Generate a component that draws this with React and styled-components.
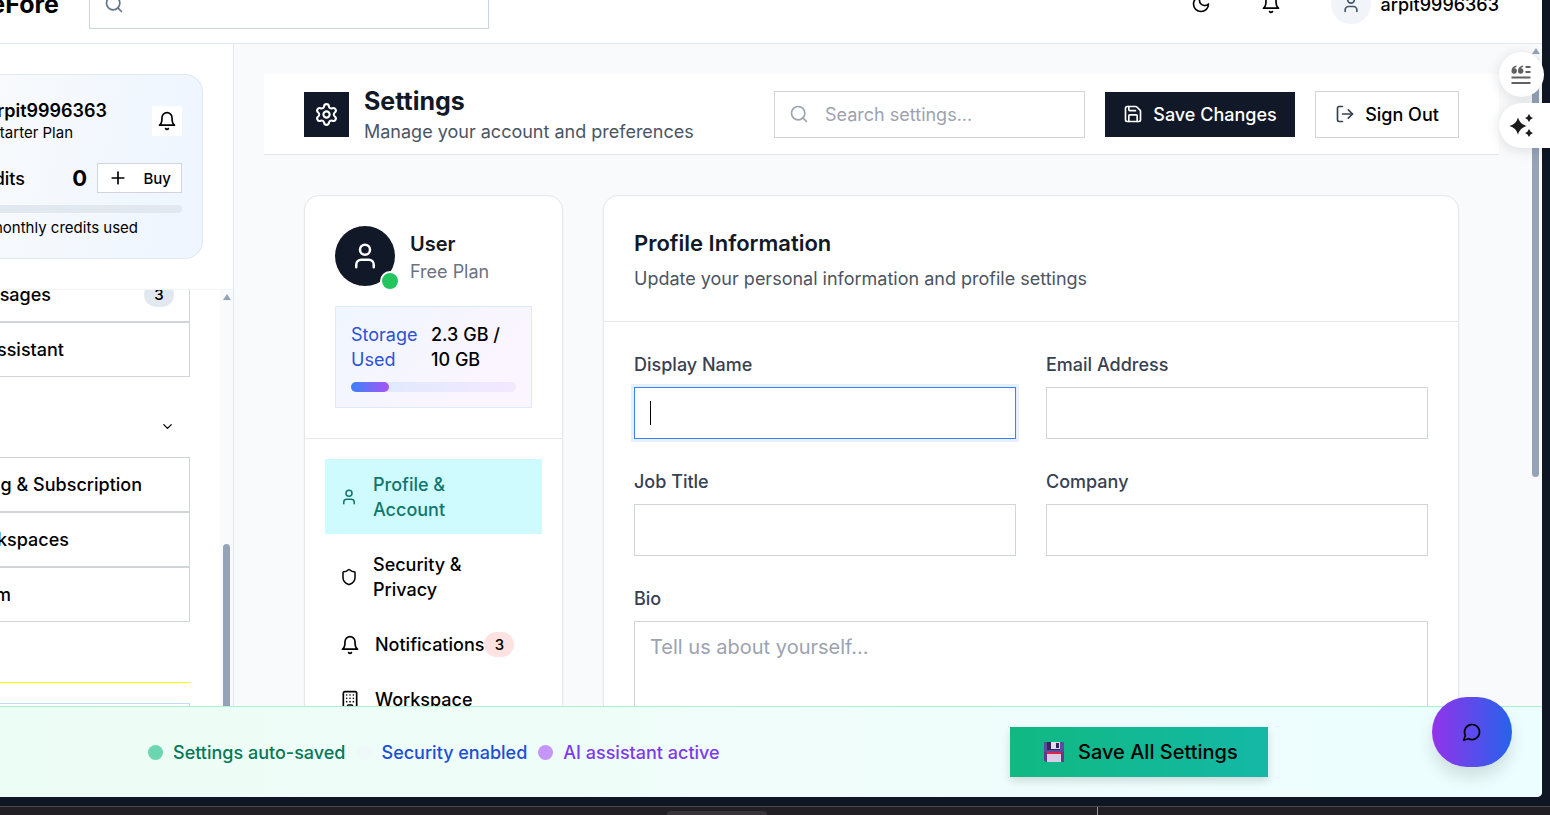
import React from "react";
import styled, { createGlobalStyle, css } from "styled-components";
import { Building, ChevronDown, LogOut, Plus, Save, Search, Settings, User } from "lucide-react";

const GlobalStyle = createGlobalStyle`
  *, *::before, *::after { box-sizing: border-box; }
  body { margin: 0; background: #0f1624; font-family: Inter, "Liberation Sans", sans-serif; font-size: 18px; line-height: 25px; color: #000; }
  button, input, textarea { font: inherit; color: inherit; }
  h1, h2, p { margin: 0; }
  svg { flex: none; display: block; }
`;

/* ---------- icons ---------- */
const Stroke = ({ size = 20, width = 2, children }) => (
  <svg width={size} height={size} viewBox="0 0 24 24" fill="none" stroke="currentColor" strokeWidth={width} strokeLinecap="round" strokeLinejoin="round" aria-hidden="true">
    {children}
  </svg>
);
const BellIcon = (props) => (
  <Stroke {...props}>
    <path d="M6 8a6 6 0 0 1 12 0c0 7 3 9 3 9H3s3-2 3-9" />
    <path d="M10.3 21a1.94 1.94 0 0 0 3.4 0" />
  </Stroke>
);
const MoonIcon = (props) => (
  <Stroke {...props}><path d="M12 3a6 6 0 0 0 9 9 9 9 0 1 1-9-9Z" /></Stroke>
);
const ShieldIcon = (props) => (
  <Stroke {...props}><path d="M20 13c0 5-3.5 7.5-7.66 8.95a1 1 0 0 1-.67-.01C7.5 20.5 4 18 4 13V6a1 1 0 0 1 1-1c2 0 4.5-1.2 6.24-2.72a1.17 1.17 0 0 1 1.52 0C14.51 3.81 17 5 19 5a1 1 0 0 1 1 1z" /></Stroke>
);
const ChatIcon = (props) => (
  <Stroke {...props}><path d="M7.9 20A9 9 0 1 0 4 16.1L2 22Z" /></Stroke>
);
const QuoteIcon = () => (
  <svg width="20" height="20" viewBox="0 0 20 20" fill="#606060" aria-hidden="true">
    <path d="M5.500 .5C2 1 .5 3.300 .5 6A2.700 2.700 0 1 0 3.400 3.300C3.700 2.700 4.500 2.300 5.500 2.100Z" />
    <path d="M12 .5C8.500 1 7 3.300 7 6A2.700 2.700 0 1 0 9.900 3.300C10.200 2.700 11 2.300 12 2.100Z" />
    <path d="M14.500 1h5v2h-5zM14.500 6h5v2h-5zM.5 11.500h19v2h-19zM.5 17h19v2h-19z" />
  </svg>
);
const SparkleIcon = () => (
  <svg width="24" height="24" viewBox="0 0 24 24" fill="#1c1c1c" aria-hidden="true">
    <path d="M9 3.500Q10.800 10.200 17.500 12Q10.800 13.800 9 20.500Q7.200 13.800 .5 12Q7.200 10.200 9 3.500Z" />
    <path d="M20 0Q21 3 24 4Q21 5 20 8Q19 5 16 4Q19 3 20 0Z" />
    <path d="M20 15Q21 18 24 19Q21 20 20 23Q19 20 16 19Q19 18 20 15Z" />
  </svg>
);
const FloppyIcon = () => (
  <svg width="20" height="20" viewBox="0 0 20 20" aria-hidden="true">
    <path d="M2 0H19a1 1 0 0 1 1 1V19a1 1 0 0 1-1 1H2L0 18V1A1 1 0 0 1 1 0Z" fill="#5c4a9c" />
    <path d="M0 10H20V19a1 1 0 0 1-1 1H2L0 18Z" fill="#64398c" />
    <path d="M3 0H16V8H3Z" fill="#33265c" />
    <path d="M7 0H16V7H7Z" fill="#e2d9ee" />
    <path d="M12 1H15V6H12Z" fill="#33265c" />
    <path d="M3 10H17V20H3Z" fill="#d9cbe8" />
    <path d="M3 10H17V12H3Z" fill="#dc2648" />
  </svg>
);

/* ---------- shell ---------- */
const Screen = styled.div`
  position: relative;
  display: flex;
  flex-direction: column;
  height: 100vh;
  overflow: hidden;
  background: #0f1624;
`;
const AppWindow = styled.div`
  position: relative;
  flex: 1;
  min-height: 0;
  display: flex;
  flex-direction: column;
  margin-right: 8px;
  overflow: hidden;
  background: #fff;
  border-bottom-right-radius: 5px;
`;
const Columns = styled.div`
  flex: 1;
  min-height: 0;
  display: flex;
  overflow: hidden;
`;
const EdgeText = styled.span`
  display: flex;
  justify-content: flex-end;
  overflow: hidden;
  white-space: nowrap;
  width: ${(p) => p.$to}px;
  font-size: ${(p) => p.$size || 18}px;
  font-weight: ${(p) => p.$weight || 500};
  line-height: ${(p) => p.$line || 25}px;
`;

const TopBar = styled.header`
  flex: none;
  display: flex;
  align-items: flex-end;
  height: 44px;
  padding: 0 43px 14px 0;
  overflow: hidden;
  border-bottom: 1px solid #e2e8f0;
`;
const TopRow = styled.div`
  flex: 1;
  display: flex;
  align-items: center;
  gap: 30px;
  height: 50px;
`;
const SearchField = styled.label`
  display: flex;
  align-items: center;
  gap: 16px;
  width: ${(p) => p.$width}px;
  height: ${(p) => p.$height}px;
  padding: 0 14px;
  border: 1px solid ${(p) => p.$line};
  background: #fff;
  color: ${(p) => p.$tone};
`;
const SearchInput = styled.input`
  flex: 1;
  min-width: 0;
  padding: 0;
  border: 0;
  outline: 0;
  background: transparent;
  &::placeholder { color: #9ca3af; opacity: 1; }
`;
const TopActions = styled.div`
  display: flex;
  align-items: center;
  margin-left: auto;
`;
const IconButton = styled.button`
  display: grid;
  place-items: center;
  width: ${(p) => p.$size}px;
  height: ${(p) => p.$size}px;
  padding: 0;
  border: 0;
  background: #fff;
`;
const TopIcons = styled.div`
  display: flex;
  gap: 20px;
  margin-right: 35px;
`;
const Account = styled.button`
  display: flex;
  align-items: center;
  gap: 10px;
  padding: 0;
  border: 0;
  background: none;
  font-weight: 500;
`;
const AccountPicture = styled.span`
  display: grid;
  place-items: center;
  width: 40px;
  height: 40px;
  border-radius: 50%;
  background: #f1f5f9;
  color: #475569;
`;

/* ---------- sidebar ---------- */
const Sidebar = styled.aside`
  flex: none;
  display: flex;
  flex-direction: column;
  width: 234px;
  border-right: 1px solid #e2e8f0;
`;
const PlanArea = styled.div`
  padding: 30px 30px 30px 0;
  border-bottom: 1px solid #f1f5f9;
`;
const PlanCard = styled.section`
  display: flex;
  flex-direction: column;
  height: 185px;
  padding: 23px 20px 0 0;
  border: 1px solid #e2e8f0;
  border-left: 0;
  border-radius: 0 18px 18px 0;
  background: linear-gradient(100deg, #f8fafc, #eff6ff 80%);
`;
const PlanRow = styled.div`
  display: flex;
  align-items: center;
  justify-content: space-between;
  margin-bottom: ${(p) => p.$after}px;
`;
const Credits = styled.div`
  display: flex;
  align-items: center;
  gap: 10px;
  font-size: 22px;
  font-weight: 700;
`;
const BuyButton = styled.button`
  display: flex;
  align-items: center;
  justify-content: space-between;
  width: 85px;
  height: 30px;
  padding: 0 10px;
  border: 1px solid #d1d5db;
  background: #fff;
  font-size: 15px;
  font-weight: 500;
`;
const CreditBar = styled.div`
  height: 8px;
  margin-bottom: 5px;
  border-radius: 0 4px 4px 0;
  background: #e2e8f0;
`;
const NavScroller = styled.div`
  flex: 1;
  min-height: 0;
  display: flex;
  justify-content: space-between;
  overflow: hidden;
`;
const NavList = styled.nav`
  flex: none;
  width: 190px;
  margin-top: -23px;
`;
const NavButton = styled.button`
  display: flex;
  align-items: center;
  justify-content: space-between;
  width: 100%;
  height: 55px;
  padding: 0 15px 0 0;
  border: 1px solid #d1d5db;
  border-left: 0;
  background: #fff;
`;
const NavGroup = styled.button`
  display: flex;
  align-items: center;
  justify-content: flex-end;
  width: 100%;
  height: 80px;
  padding: 18px 15px 0 0;
  border: 0;
  background: none;
`;
const Divider = styled.hr`
  height: 1px;
  margin: 60px 0 20px;
  border: 0;
  background: #ff0;
`;
const UsageCard = styled.div`
  height: 60px;
  border: 1px solid #bfdbfe;
  border-left: 0;
`;
const Badge = styled.span`
  display: grid;
  place-items: center;
  width: 30px;
  height: 25px;
  border-radius: 13px;
  background: ${(p) => p.$fill};
  font-size: 15px;
  font-weight: 500;
`;
const Track = styled.div`
  flex: none;
  display: flex;
  flex-direction: column;
  align-items: center;
  width: 13px;
  padding-top: 4px;
  background: #f8fafc;
  &::before {
    content: "";
    flex: none;
    border: 4px solid transparent;
    border-top: 0;
    border-bottom: 6px solid #94a3b8;
  }
`;
const Thumb = styled.div`
  flex: none;
  width: 7px;
  height: ${(p) => p.$length}px;
  margin-top: ${(p) => p.$start}px;
  border-radius: 4px;
  background: #94a3b8;
`;

/* ---------- main ---------- */
const Main = styled.main`
  flex: 1;
  min-width: 0;
  padding: 30px;
  overflow: hidden;
  background: #f8fafc;
`;
const PageHeader = styled.header`
  display: flex;
  align-items: center;
  gap: 20px;
  height: 81px;
  padding: 0 40px;
  border-bottom: 1px solid #e5e7eb;
  background: #fff;
`;
const Heading = styled.div`
  display: flex;
  align-items: center;
  gap: 15px;
  margin-right: auto;
`;
const GearTile = styled.span`
  display: grid;
  place-items: center;
  width: 45px;
  height: 45px;
  background: #111827;
  color: #fff;
`;
const Title = styled.h1`
  font-size: 25px;
  font-weight: 700;
  line-height: 35px;
  color: #111827;
`;
const Note = styled.p`
  color: ${(p) => p.$tone || "#4b5563"};
`;
const HeaderButton = styled.button`
  display: flex;
  align-items: center;
  justify-content: center;
  gap: 10px;
  width: ${(p) => p.$width}px;
  height: ${(p) => (p.$dark ? 45 : 47)}px;
  padding: 0;
  border: ${(p) => (p.$dark ? "0" : "1px solid #d1d5db")};
  background: ${(p) => (p.$dark ? "#111827" : "#fff")};
  color: ${(p) => (p.$dark ? "#fff" : "#000")};
  font-weight: 500;
  svg { color: ${(p) => (p.$dark ? "#fff" : "#374151")}; }
`;
const Content = styled.div`
  display: flex;
  align-items: flex-start;
  gap: 40px;
  padding: 40px;
`;
const Card = styled.section`
  border: 1px solid #e5e7eb;
  border-radius: 15px;
  background: #fff;
  box-shadow: 0 1px 2px rgba(0, 0, 0, 0.05);
  ${(p) => (p.$width ? css`flex: none; width: ${p.$width}px;` : css`flex: 1; min-width: 0;`)}
`;
const CardTop = styled.div`
  padding: 30px;
  border-bottom: 1px solid #e5e7eb;
`;
const Person = styled.div`
  display: flex;
  align-items: center;
  gap: 15px;
  margin-bottom: 20px;
`;
const Avatar = styled.span`
  position: relative;
  display: grid;
  place-items: center;
  width: 60px;
  height: 60px;
  border-radius: 50%;
  background: #111827;
  color: #fff;
  &::after {
    content: "";
    position: absolute;
    right: -5px;
    bottom: -5px;
    width: 20px;
    height: 20px;
    border: 2px solid #fff;
    border-radius: 50%;
    background: #22c55e;
  }
`;
const PersonName = styled.p`
  font-size: 20px;
  font-weight: 600;
  line-height: 30px;
  color: #111827;
`;
const StorageBox = styled.div`
  padding: 15px;
  border: 1px solid #dbeafe;
  background: linear-gradient(135deg, #eff6ff, #faf5ff 70%);
`;
const StorageText = styled.div`
  display: flex;
  gap: 15px;
  margin-bottom: 10px;
`;
const StorageLabel = styled.span`
  width: 65px;
  color: #2952d9;
`;
const StorageValue = styled.span`
  width: 70px;
  font-weight: 500;
`;
const Meter = styled.div`
  height: 10px;
  border-radius: 5px;
  background: linear-gradient(90deg, #dbeafe, #f3e8ff);
`;
const MeterFill = styled.div`
  height: 100%;
  border-radius: 5px;
  background: linear-gradient(90deg, #3b82f6, #a855f7);
`;
const Menu = styled.nav`
  display: flex;
  flex-direction: column;
  gap: 5px;
  padding: 20px;
`;
const MenuItem = styled.button`
  display: flex;
  align-items: center;
  padding: 13px 15px 12px;
  border: 0;
  background: ${(p) => (p.$active ? "#cffafe" : "#fff")};
  color: ${(p) => (p.$active ? "#0f766e" : "#000")};
  font-weight: 500;
  text-align: left;
  svg { margin-right: 15px; }
`;
const MenuText = styled.span`
  max-width: 110px;
`;
const CardTitle = styled.h2`
  margin-bottom: 5px;
  font-size: 22px;
  font-weight: 600;
  line-height: 35px;
  color: #111827;
`;
const Form = styled.form`
  display: grid;
  grid-template-columns: 1fr 1fr;
  gap: 30px;
  padding: 30px;
`;
const Field = styled.label`
  position: relative;
  display: flex;
  flex-direction: column;
  gap: 10px;
  grid-column: ${(p) => (p.$wide ? "1 / -1" : "auto")};
  font-weight: 500;
  color: #374151;
`;
const box = css`
  width: 100%;
  padding: 10px 15px;
  border: 1px solid #d1d5db;
  border-radius: 0;
  outline: 0;
  background: #fff;
  font-size: 20px;
  font-weight: 400;
  line-height: 30px;
  &::placeholder { color: #9ca3af; opacity: 1; }
`;
const TextInput = styled.input`
  ${box}
  height: 52px;
  ${(p) => p.$focused && css`
    border-color: #3b82f6;
    box-shadow: 0 0 0 3px rgba(59, 130, 246, 0.12);
  `}
`;
const TextArea = styled.textarea`
  ${box}
  height: 150px;
  resize: none;
`;
const Caret = styled.span`
  position: absolute;
  left: 16px;
  bottom: 14px;
  width: 1px;
  height: 24px;
  background: #000;
`;

/* ---------- footer ---------- */
const SaveBar = styled.footer`
  flex: none;
  display: flex;
  align-items: center;
  justify-content: space-between;
  height: 91px;
  padding: 0 274px 0 148px;
  border-top: 1px solid #a7f3d0;
  background: linear-gradient(90deg, #ecfdf5, #f0fdfa 50%, #ecfeff);
`;
const StatusList = styled.div`
  display: flex;
  gap: 11px;
`;
const Status = styled.span`
  display: flex;
  align-items: center;
  gap: 10px;
  color: ${(p) => p.$tone};
  font-weight: 500;
  &::before {
    content: "";
    width: 15px;
    height: 15px;
    border-radius: 50%;
    background: ${(p) => p.$dot};
  }
`;
const SaveAll = styled.button`
  display: flex;
  align-items: center;
  gap: 14px;
  width: 258px;
  height: 50px;
  padding: 0 0 0 34px;
  border: 0;
  background: linear-gradient(90deg, #10b981, #14b8a6);
  box-shadow: 0 4px 8px rgba(0, 0, 0, 0.14);
  font-size: 20px;
  font-weight: 500;
`;
const ChatButton = styled.button`
  position: absolute;
  right: 30px;
  bottom: 30px;
  display: grid;
  place-items: center;
  width: 80px;
  height: 70px;
  padding: 0;
  border: 0;
  border-radius: 35px;
  background: linear-gradient(90deg, #9333ea, #2563eb);
  box-shadow: 0 10px 16px rgba(0, 0, 0, 0.12);
`;
const FloatingTools = styled.div`
  position: absolute;
  top: 52px;
  right: 0;
  display: flex;
  flex-direction: column;
  gap: 6px;
  width: 51px;
`;
const ToolButton = styled.button`
  display: flex;
  align-items: center;
  width: ${(p) => (p.$docked ? 51 : 45)}px;
  height: 45px;
  padding: 0 0 0 ${(p) => (p.$docked ? 10 : 12)}px;
  border: 0;
  border-radius: ${(p) => (p.$docked ? "23px 0 0 23px" : "23px")};
  background: #fff;
  box-shadow: 0 2px 14px rgba(0, 0, 0, 0.12);
`;
const Taskbar = styled.div`
  flex: none;
  display: flex;
  align-items: flex-end;
  height: 9px;
  margin-top: 9px;
  border-top: 1px solid #48464a;
  background: #221f24;
`;
const TaskTab = styled.div`
  width: 100px;
  height: 4px;
  margin-left: 43%;
  border-radius: 4px 4px 0 0;
  background: #373338;
`;
const TaskMark = styled.div`
  width: 1px;
  height: 8px;
  margin-left: auto;
  margin-right: 452px;
  background: #97959a;
`;

const navBusiness = [
  { text: "ng & Subscription", to: 142 },
  { text: "kspaces", to: 69 },
  { text: "m", to: 11 },
];
const fields = ["Email Address", "Job Title", "Company"];

export default function App() {
  return (
    <Screen>
      <GlobalStyle />
      <AppWindow>
        <TopBar>
          <TopRow>
            <EdgeText $to={59} $size={25} $weight={700}>eFore</EdgeText>
            <SearchField $width={400} $height={50} $line="#cbd5e1" $tone="#64748b">
              <Search size={20} />
              <SearchInput aria-label="Search" />
            </SearchField>
            <TopActions>
              <TopIcons>
                <IconButton $size={50} aria-label="Dark mode"><MoonIcon /></IconButton>
                <IconButton $size={50} aria-label="Notifications"><BellIcon /></IconButton>
              </TopIcons>
              <Account>
                <AccountPicture><User size={20} /></AccountPicture>
                arpit9996363
              </Account>
            </TopActions>
          </TopRow>
        </TopBar>

        <Columns>
          <Sidebar>
            <PlanArea>
              <PlanCard>
                <PlanRow $after={20}>
                  <div>
                    <EdgeText $to={107} $weight={600}>rpit9996363</EdgeText>
                    <EdgeText $to={73} $size={15} $weight={400} $line={20}>tarter Plan</EdgeText>
                  </div>
                  <IconButton $size={30} aria-label="Plan alerts"><BellIcon /></IconButton>
                </PlanRow>
                <PlanRow $after={12}>
                  <EdgeText $to={25}>dits</EdgeText>
                  <Credits>
                    0
                    <BuyButton><Plus size={20} />Buy</BuyButton>
                  </Credits>
                </PlanRow>
                <CreditBar />
                <EdgeText $to={138} $size={15} $weight={400} $line={20}>monthly credits used</EdgeText>
              </PlanCard>
            </PlanArea>
            <NavScroller>
              <NavList>
                <NavButton>
                  <EdgeText $to={51}>sages</EdgeText>
                  <Badge $fill="#e2e8f0">3</Badge>
                </NavButton>
                <NavButton><EdgeText $to={64}>ssistant</EdgeText></NavButton>
                <NavGroup aria-label="Toggle group"><ChevronDown size={15} /></NavGroup>
                {navBusiness.map((item) => (
                  <NavButton key={item.text}><EdgeText $to={item.to}>{item.text}</EdgeText></NavButton>
                ))}
                <Divider />
                <UsageCard />
              </NavList>
              <Track><Thumb $start={244} $length={200} /></Track>
            </NavScroller>
          </Sidebar>

          <Main>
            <PageHeader>
              <Heading>
                <GearTile><Settings size={25} /></GearTile>
                <div>
                  <Title>Settings</Title>
                  <Note>Manage your account and preferences</Note>
                </div>
              </Heading>
              <SearchField $width={311} $height={47} $line="#d1d5db" $tone="#9ca3af">
                <Search size={20} />
                <SearchInput aria-label="Search settings" placeholder="Search settings..." />
              </SearchField>
              <HeaderButton $dark $width={190}><Save size={20} />Save Changes</HeaderButton>
              <HeaderButton $width={144}><LogOut size={20} />Sign Out</HeaderButton>
            </PageHeader>

            <Content>
              <Card $width={259}>
                <CardTop>
                  <Person>
                    <Avatar><User size={30} /></Avatar>
                    <div>
                      <PersonName>User</PersonName>
                      <Note $tone="#6b7280">Free Plan</Note>
                    </div>
                  </Person>
                  <StorageBox>
                    <StorageText>
                      <StorageLabel>Storage Used</StorageLabel>
                      <StorageValue>2.3 GB / 10 GB</StorageValue>
                    </StorageText>
                    <Meter><MeterFill style={{ width: "23%" }} /></Meter>
                  </StorageBox>
                </CardTop>
                <Menu>
                  <MenuItem $active><User size={18} /><MenuText>Profile &amp; Account</MenuText></MenuItem>
                  <MenuItem><ShieldIcon size={18} /><MenuText>Security &amp; Privacy</MenuText></MenuItem>
                  <MenuItem><BellIcon /><MenuText>Notifications</MenuText><Badge $fill="#fee2e2">3</Badge></MenuItem>
                  <MenuItem><Building size={20} /><MenuText>Workspace</MenuText></MenuItem>
                </Menu>
              </Card>

              <Card>
                <CardTop>
                  <CardTitle>Profile Information</CardTitle>
                  <Note>Update your personal information and profile settings</Note>
                </CardTop>
                <Form onSubmit={(e) => e.preventDefault()}>
                  <Field>
                    Display Name
                    <TextInput $focused />
                    <Caret />
                  </Field>
                  {fields.map((name) => (
                    <Field key={name}>{name}<TextInput /></Field>
                  ))}
                  <Field $wide>
                    Bio
                    <TextArea placeholder="Tell us about yourself..." />
                  </Field>
                </Form>
              </Card>
            </Content>
          </Main>
          <Track><Thumb $start={4} $length={419} /></Track>
        </Columns>

        <SaveBar>
          <StatusList>
            <Status $tone="#047857" $dot="#6bd6b0">Settings auto-saved</Status>
            <Status $tone="#1d4ed8" $dot="#eff9f9">Security enabled</Status>
            <Status $tone="#7c3aed" $dot="#c595f8">AI assistant active</Status>
          </StatusList>
          <SaveAll><FloppyIcon />Save All Settings</SaveAll>
        </SaveBar>
        <ChatButton aria-label="Open chat"><ChatIcon /></ChatButton>
      </AppWindow>
      <Taskbar><TaskTab /><TaskMark /></Taskbar>
      <FloatingTools>
        <ToolButton aria-label="Reading view"><QuoteIcon /></ToolButton>
        <ToolButton $docked aria-label="Assistant"><SparkleIcon /></ToolButton>
      </FloatingTools>
    </Screen>
  );
}
